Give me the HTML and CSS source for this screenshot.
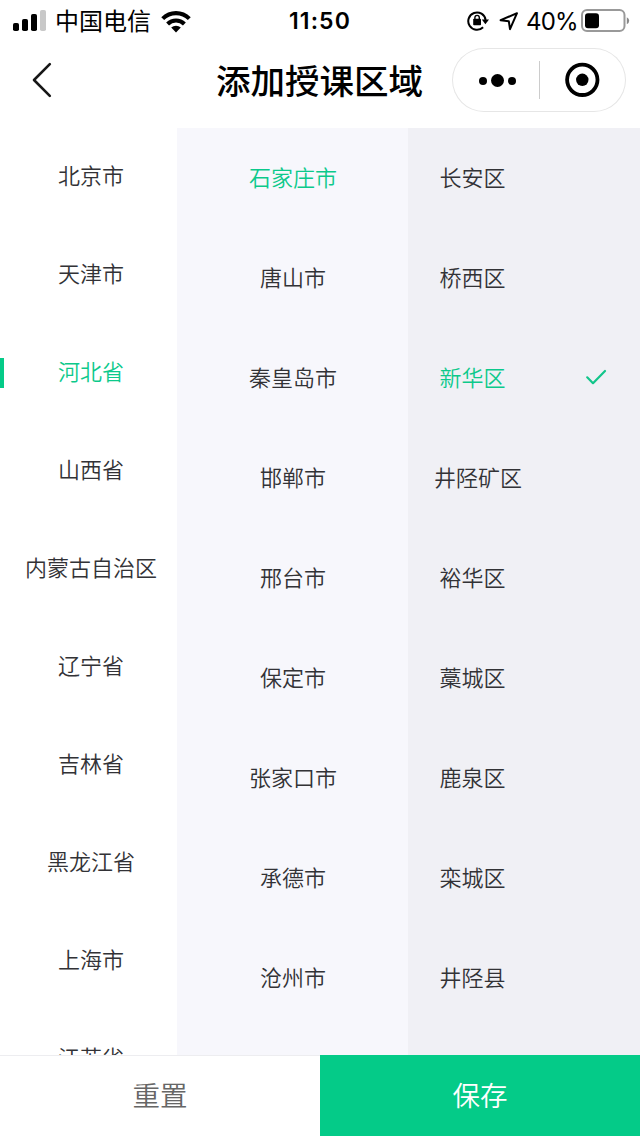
FILE: index.html
```html
<!DOCTYPE html>
<html lang="zh-CN">
<head>
<meta charset="utf-8">
<title>添加授课区域</title>
<link rel="stylesheet" href="styles.css">
</head>
<body>
<div class="app">
  <div class="status">
    <div class="status-left">
      <svg class="signal" width="34" height="22" viewBox="0 0 34 22"><rect x="0" y="13" width="6" height="8" rx="1.8"/><rect x="9" y="9" width="6" height="12" rx="1.8"/><rect x="18" y="4" width="6" height="17" rx="1.8"/><rect x="27" y="0" width="6" height="21" rx="1.8" fill="#c8c8c8"/></svg>
      <span class="carrier">中国电信</span>
      <svg class="wifi" width="30" height="23" viewBox="0 0 30 23"><g fill="none" stroke="#000" stroke-width="4.1"><path d="M1.7 8.6a19 19 0 0 1 26.6 0"/><path d="M6.6 14a12 12 0 0 1 16.8 0"/></g><path d="M10.2 17.6a7 7 0 0 1 9.6 0L15 22.4z"/></svg>
    </div>
    <div class="time">11:50</div>
    <div class="status-right">
      <svg width="22" height="22" viewBox="0 0 22 22"><path d="M16.1 17.3A8.7 8.7 0 1 1 18.6 10" fill="none" stroke="#000" stroke-width="2"/><path d="M14.8 9.5h7.2l-3.6 4.8z"/><rect x="6.2" y="8.8" width="7.8" height="6.4" rx=".8"/><path d="M7.9 10V7.6a2.2 2.2 0 0 1 4.4 0V10" fill="none" stroke="#000" stroke-width="1.4"/></svg>
      <svg class="locate" width="20" height="20" viewBox="0 0 20 20"><path d="M1.6 9.2L18 2.2 11 18.2 9.8 10.2z" fill="none" stroke="#000" stroke-width="2" stroke-linejoin="round"/></svg>
      <span class="percent">40%</span>
      <svg class="battery" width="49" height="24" viewBox="0 0 49 24"><rect x="1" y="1" width="42.5" height="21" rx="5" fill="none" stroke="#999" stroke-width="2"/><rect x="4" y="4.2" width="14" height="15" rx="3"/><path d="M45.8 8.3q2.4 1 2.4 3.5t-2.4 3.5z" fill="#888"/></svg>
    </div>
  </div>
  <header class="nav">
    <svg class="back" width="22" height="36" viewBox="0 0 22 36"><path d="M19.8 2.2L4 18 19.8 33.8" fill="none" stroke="#171717" stroke-width="2.6" stroke-linecap="round" stroke-linejoin="round"/></svg>
    <h1 class="title">添加授课区域</h1>
    <div class="capsule">
      <svg width="174" height="64" viewBox="0 0 174 64"><circle cx="31" cy="33" r="4"/><circle cx="45.5" cy="32.5" r="6.5"/><circle cx="60" cy="33" r="4"/><path d="M87.5 13v38" stroke="#ccc" stroke-width="1"/><circle cx="130.3" cy="31.8" r="15.2" fill="none" stroke="#000" stroke-width="3.8"/><circle cx="130.3" cy="31.8" r="6.2"/></svg>
    </div>
  </header>
  <main class="columns">
    <ul class="list provinces">
      <li>北京市</li><li>天津市</li><li class="active">河北省</li><li>山西省</li><li>内蒙古自治区</li><li>辽宁省</li><li>吉林省</li><li>黑龙江省</li><li>上海市</li><li>江苏省</li>
    </ul>
    <ul class="list cities">
      <li class="active">石家庄市</li><li>唐山市</li><li>秦皇岛市</li><li>邯郸市</li><li>邢台市</li><li>保定市</li><li>张家口市</li><li>承德市</li><li>沧州市</li>
    </ul>
    <ul class="list districts">
      <li><span>长安区</span></li><li><span>桥西区</span></li>
      <li class="active"><span>新华区</span><svg width="22" height="18" viewBox="0 0 22 18"><path d="M2.2 9.3L8 15.2 20 3" fill="none" stroke="#12c58a" stroke-width="2.2" stroke-linecap="round" stroke-linejoin="round"/></svg></li>
      <li><span>井陉矿区</span></li><li><span>裕华区</span></li><li><span>藁城区</span></li><li><span>鹿泉区</span></li><li><span>栾城区</span></li><li><span>井陉县</span></li>
    </ul>
  </main>
  <footer class="actions">
    <button class="reset">重置</button>
    <button class="save">保存</button>
  </footer>
</div>
</body>
</html>
```
FILE: styles.css
```css
* { box-sizing: border-box; }
body { margin: 0; background: #fff; font-family: "Noto Sans CJK SC", sans-serif; color: #323236; }
svg { display: block; flex: none; }
.app { width: 640px; height: 1136px; display: flex; flex-direction: column; overflow: hidden; }
.status { height: 40px; flex: none; display: grid; grid-template-columns: 1fr auto 1fr; color: #000; }
.status-left { display: flex; align-items: center; padding-left: 13px; }
.carrier { font-size: 24px; line-height: 38px; padding-bottom: 2px; margin: 0 10px 0 8px; }
.time { font: 600 23px/42px Inter, sans-serif; letter-spacing: 1.1px; }
.status-right { display: flex; align-items: center; justify-content: flex-end; padding-right: 10px; }
.locate { margin-left: 10px; }
.percent { font: 400 24px/41px Inter, sans-serif; width: 55px; margin-left: 7px; letter-spacing: -0.8px; white-space: nowrap; }
.nav { height: 88px; flex: none; display: grid; grid-template-columns: 186px 236px 174px; padding: 8px 14px 16px 30px; }
.back { margin-top: 14px; }
.title { margin: 0; font-size: 34.5px; line-height: 62px; font-weight: 500; color: #000; }
.capsule { width: 174px; height: 64px; border-radius: 32px; box-shadow: inset 0 0 0 1px #e6e6e6; }
.columns { height: 927px; flex: none; display: grid; grid-template-columns: 177px 231px 232px; overflow: hidden; }
.list { margin: 0; padding: 0; list-style: none; font-size: 22px; line-height: 30px; font-weight: 350; }
.list li { display: flex; align-items: center; height: 100px; padding-bottom: 4px; }
.list .active { color: #0cc98b; }
.provinces { padding-left: 5px; }
.provinces li { height: 98px; padding-bottom: 6px; justify-content: center; white-space: nowrap; }
.provinces .active { margin-left: -5px; justify-content: flex-start; }
.provinces .active::before { content: ""; width: 4px; height: 30px; background: #04cb88; margin-right: 54px; transform: translateY(3px); }
.cities { background: #f7f7fc; }
.cities li { justify-content: center; padding-left: 1px; }
.districts { background: #f0f0f5; }
.districts li { justify-content: space-between; padding: 0 33px 4px 26px; }
.districts span { min-width: 77px; text-align: center; }
.districts svg { margin-top: 2px; }
.actions { height: 81px; flex: none; display: grid; grid-template-columns: 1fr 1fr; }
.actions button { margin: 0; padding: 0 0 4px; border: 0; font: 350 27.5px/76px "Noto Sans CJK SC", sans-serif; }
.reset { background: #fff; color: #666; box-shadow: inset 0 1px #ededf0; }
.save { background: #04cb88; color: #fff; }
```
